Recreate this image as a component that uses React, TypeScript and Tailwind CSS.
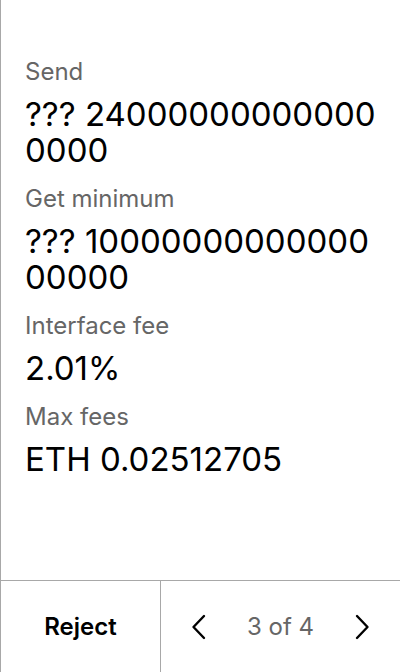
import React from "react";

const rows = [
  { label: "Send", value: "??? 240000000000000000" },
  { label: "Get minimum", value: "??? 1000000000000000000" },
  { label: "Interface fee", value: "2.01%" },
  { label: "Max fees", value: "ETH 0.02512705" },
];

const Chevron = ({ dir }: { dir: "left" | "right" }) => (
  <svg width="16" height="26" viewBox="0 0 16 26" fill="none">
    <polyline
      points={dir === "left" ? "13,2 2.5,13 13,24" : "3,2 13.5,13 3,24"}
      stroke="#000"
      strokeWidth="2.4"
      strokeLinecap="round"
      strokeLinejoin="round"
    />
  </svg>
);

export default function App() {
  return (
    <div
      className="flex h-[672px] w-[400px] flex-col border-l border-[#a8a8a8] bg-white"
      style={{ fontFamily: "Inter, 'Noto Sans', sans-serif" }}
    >
      <div className="flex flex-1 flex-col gap-4 pl-6 pr-4 pt-[57px]">
        {rows.map((r) => (
          <div key={r.label} className="flex flex-col gap-[9px]">
            <div className="text-[24px] leading-[30px] text-[#666666]">{r.label}</div>
            <div className="break-all text-[33px] leading-[36px] text-black">{r.value}</div>
          </div>
        ))}
      </div>
      <div className="flex h-[92px] border-t border-[#a8a8a8]">
        <button className="flex w-[160px] items-center justify-center border-r border-[#a8a8a8] text-[24px] font-semibold text-black">
          Reject
        </button>
        <div className="flex flex-1 items-center justify-between px-[22px]">
          <button className="flex h-10 w-8 items-center justify-center">
            <Chevron dir="left" />
          </button>
          <span className="text-[24px] text-[#666666]">3 of 4</span>
          <button className="flex h-10 w-8 items-center justify-center">
            <Chevron dir="right" />
          </button>
        </div>
      </div>
    </div>
  );
}
